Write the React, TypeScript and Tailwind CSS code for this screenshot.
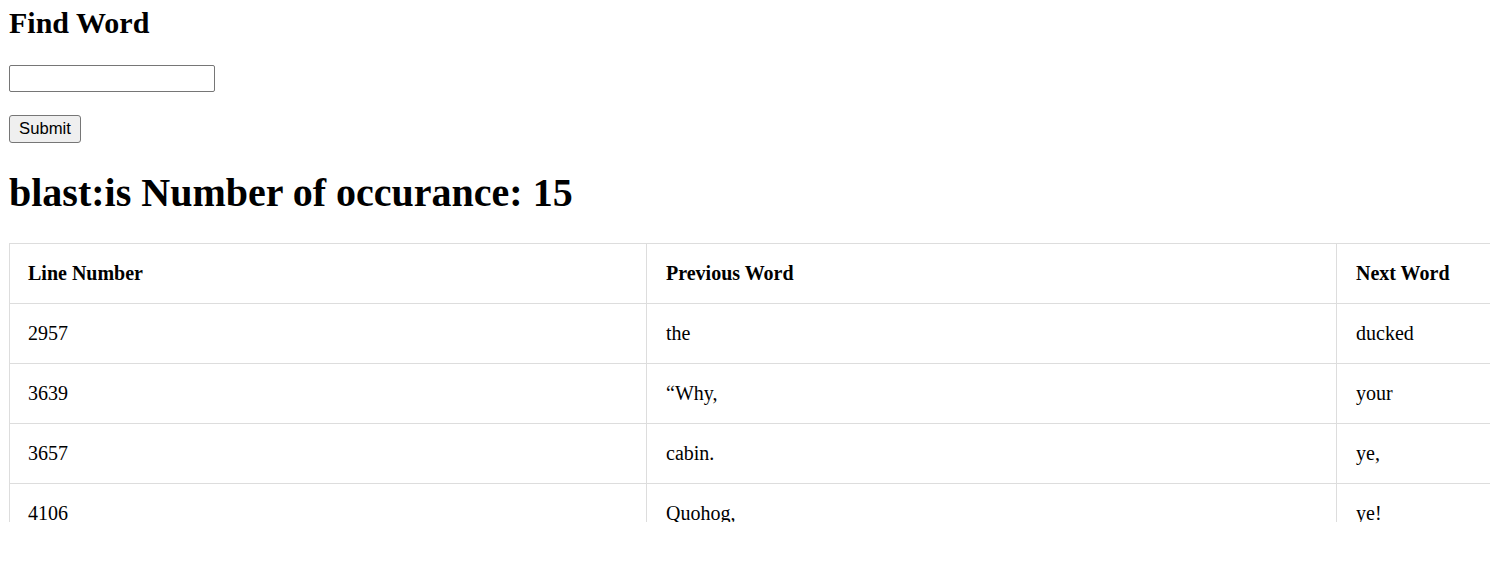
import React from "react";

const rows: [string, string, string][] = [
  ["2957", "the", "ducked"],
  ["3639", "\u201cWhy,", "your"],
  ["3657", "cabin.", "ye,"],
  ["4106", "Quohog,", "ye!"],
  ["4200", "the", "the"],
];

export default function App() {
  const cell =
    "border-r border-b border-[#dddddd] pt-[18px] pb-[18px] leading-[23px] pl-[19px] pr-[19px] whitespace-nowrap";
  return (
    <div
      className="w-[1490px] h-[522px] overflow-hidden bg-white text-black pl-[9px]"
      style={{ fontFamily: '"Liberation Serif", "Times New Roman", serif' }}
    >
      <h2 className="mt-[6px] text-[30px] leading-[34px] font-bold">Find Word</h2>
      <form className="flex flex-col items-start" onSubmit={(e) => e.preventDefault()}>
        <input
          type="text"
          className="mt-[25px] w-[206px] h-[27px] border border-[#767676] rounded-[2px] bg-white px-[2px] outline-none"
        />
        <button
          type="submit"
          className="mt-[23px] w-[72px] h-[28px] border border-[#767676] rounded-[3px] bg-[#efefef] text-[16.67px] leading-[20px] text-black flex items-center justify-center"
          style={{ fontFamily: '"Liberation Sans", Arial, sans-serif' }}
        >
          Submit
        </button>
      </form>
      <h1 className="mt-[27px] text-[40px] leading-[46px] font-bold">
        blast:is Number of occurance: 15
      </h1>
      <div className="mt-[27px] grid grid-cols-[637px_690px_300px] w-max border-l border-t border-[#dddddd] text-[20px]">
        <div className={`${cell} font-bold !pl-[18px]`}>Line Number</div>
        <div className={`${cell} font-bold`}>Previous Word</div>
        <div className={`${cell} font-bold`}>Next Word</div>
        {rows.map((r) => (
          <React.Fragment key={r[0]}>
            <div className={`${cell} !pl-[18px]`}>{r[0]}</div>
            <div className={cell}>{r[1]}</div>
            <div className={cell}>{r[2]}</div>
          </React.Fragment>
        ))}
      </div>
    </div>
  );
}
